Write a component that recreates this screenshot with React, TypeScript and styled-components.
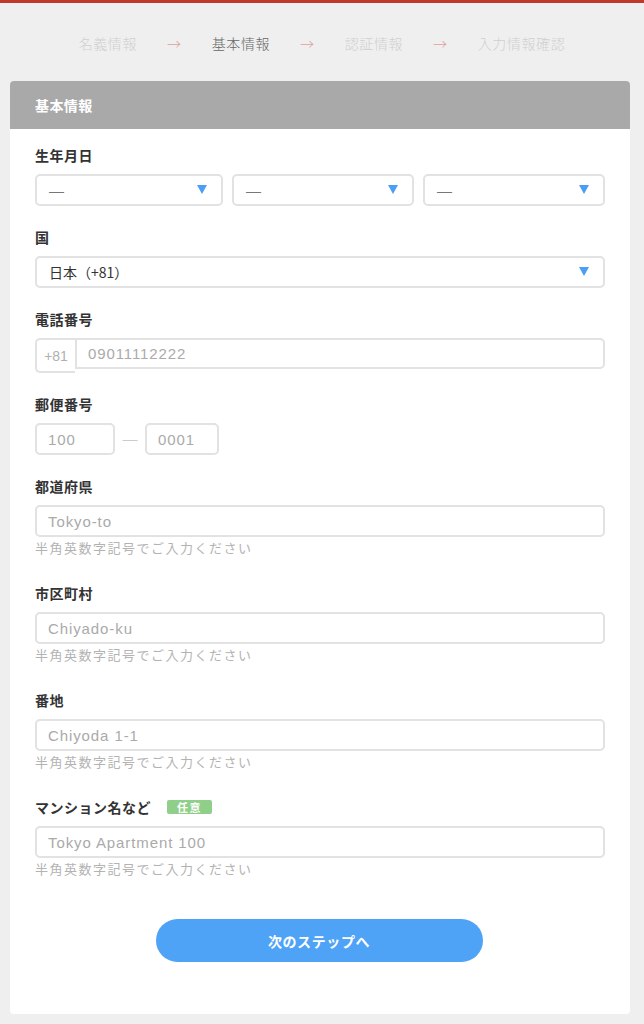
import React from 'react';
import styled, { createGlobalStyle } from 'styled-components';

const GlobalStyle = createGlobalStyle`
  html, body {
    margin: 0;
    padding: 0;
    background: #efefef;
  }
  body {
    font-family: "Noto Sans CJK JP", "Noto Sans", sans-serif;
    color: #333;
  }
`;

const latin = `"Liberation Sans", "Noto Sans CJK JP", sans-serif`;

const Page = styled.div`
  min-height: 1024px;
  background: #efefef;
  border-top: 3px solid #c0392b;
  padding-bottom: 10px;
`;

const Steps = styled.div`
  display: flex;
  justify-content: center;
  align-items: center;
  gap: 30px;
  padding: 30px 0 0 0;
  margin-bottom: 28px;
  height: 20px;
  line-height: 20px;
  font-size: 14px;
  font-weight: 300;
  letter-spacing: 0.6px;
`;

const Step = styled.span<{ $active?: boolean }>`
  color: ${p => (p.$active ? '#666' : '#cfcfcf')};
`;

const Arrow = styled.span`
  color: #e0a0a0;
  font-size: 14px;
`;

const Card = styled.div`
  margin: 0 14px 0 10px;
  background: #fff;
  border-radius: 4px;
  overflow: hidden;
`;

const CardHeader = styled.div`
  height: 48px;
  line-height: 48px;
  background: #a9a9a9;
  color: #fff;
  font-size: 14px;
  font-weight: 700;
  padding-left: 25px;
  letter-spacing: 0.4px;
`;

const CardBody = styled.div`
  padding: 16px 25px 52px 25px;
`;

const Field = styled.div<{ $hint?: boolean }>`
  margin-bottom: ${p => (p.$hint ? 26 : 21)}px;
`;

const Label = styled.div`
  display: flex;
  align-items: center;
  gap: 16px;
  height: 20px;
  line-height: 20px;
  font-size: 14px;
  font-weight: 700;
  color: #333;
  margin-bottom: 9px;
  letter-spacing: 0.5px;
`;

const Badge = styled.span`
  display: inline-block;
  background: #8fcf8a;
  color: #fff;
  font-size: 11px;
  font-weight: 700;
  line-height: 14px;
  height: 14px;
  padding: 0 10px;
  border-radius: 2px;
  letter-spacing: 1.5px;
`;

const Row = styled.div<{ $gap?: number }>`
  display: flex;
  gap: ${p => p.$gap ?? 9}px;
  align-items: flex-start;
`;

const Select = styled.div<{ $dark?: boolean; $grow?: number }>`
  flex: ${p => p.$grow ?? 1};
  position: relative;
  box-sizing: border-box;
  height: 32px;
  border: 2px solid #e2e2e2;
  border-radius: 5px;
  padding: 0 12px;
  display: flex;
  align-items: center;
  font-size: 14px;
  color: ${p => (p.$dark ? '#333' : '#777')};
`;

const SelectDash = styled.span`
  font-family: ${latin};
  font-size: 15px;
`;

const Caret = styled.span`
  position: absolute;
  right: 14px;
  top: 9px;
  width: 0;
  height: 0;
  border-left: 5px solid transparent;
  border-right: 5px solid transparent;
  border-top: 9px solid #4a9ff5;
`;

const Input = styled.div<{ $w?: number }>`
  box-sizing: border-box;
  ${p => (p.$w ? `width: ${p.$w}px;` : 'flex: 1;')}
  height: 32px;
  border: 2px solid #e2e2e2;
  border-radius: 5px;
  padding: 0 11px;
  display: flex;
  align-items: center;
  font-family: ${latin};
  font-size: 15px;
  letter-spacing: 0.9px;
  color: #aaa;
`;

const PhoneRow = styled.div`
  display: flex;
  align-items: flex-start;
`;

const Prefix = styled.div`
  box-sizing: border-box;
  width: 40px;
  height: 35px;
  border: 2px solid #e2e2e2;
  border-right: none;
  border-radius: 5px 0 0 5px;
  display: flex;
  align-items: center;
  justify-content: center;
  font-family: ${latin};
  font-size: 14px;
  color: #b0b0b0;
`;

const PhoneInput = styled(Input)`
  height: 31px;
  border-radius: 0 5px 5px 0;
`;

const Dash = styled.span`
  width: 30px;
  text-align: center;
  line-height: 32px;
  color: #ccc;
  font-family: ${latin};
  font-size: 15px;
`;

const Hint = styled.div`
  margin-top: 2px;
  font-size: 13px;
  line-height: 18px;
  color: #b3b3b3;
  letter-spacing: 1.5px;
`;

const ButtonWrap = styled.div`
  display: flex;
  justify-content: center;
  padding-top: 15px;
  padding-right: 2px;
`;

const NextButton = styled.button`
  width: 327px;
  height: 43px;
  border: none;
  border-radius: 22px;
  background: #4fa3f7;
  color: #fff;
  font-family: "Noto Sans CJK JP", sans-serif;
  font-size: 14px;
  font-weight: 700;
  letter-spacing: 0.6px;
`;

const HINT = '半角英数字記号でご入力ください';

export default function App() {
  return (
    <>
      <GlobalStyle />
      <Page>
        <Steps>
          <Step>名義情報</Step>
          <Arrow>→</Arrow>
          <Step $active>基本情報</Step>
          <Arrow>→</Arrow>
          <Step>認証情報</Step>
          <Arrow>→</Arrow>
          <Step>入力情報確認</Step>
        </Steps>
        <Card>
          <CardHeader>基本情報</CardHeader>
          <CardBody>
            <Field>
              <Label>生年月日</Label>
              <Row>
                <Select $grow={1.04}><SelectDash>—</SelectDash><Caret /></Select>
                <Select><SelectDash>—</SelectDash><Caret /></Select>
                <Select><SelectDash>—</SelectDash><Caret /></Select>
              </Row>
            </Field>
            <Field>
              <Label>国</Label>
              <Select $dark>日本（+81）<Caret /></Select>
            </Field>
            <Field>
              <Label>電話番号</Label>
              <PhoneRow>
                <Prefix>+81</Prefix>
                <PhoneInput>09011112222</PhoneInput>
              </PhoneRow>
            </Field>
            <Field>
              <Label>郵便番号</Label>
              <Row $gap={0}>
                <Input $w={80}>100</Input>
                <Dash>—</Dash>
                <Input $w={74}>0001</Input>
              </Row>
            </Field>
            <Field $hint>
              <Label>都道府県</Label>
              <Input>Tokyo-to</Input>
              <Hint>{HINT}</Hint>
            </Field>
            <Field $hint>
              <Label>市区町村</Label>
              <Input>Chiyado-ku</Input>
              <Hint>{HINT}</Hint>
            </Field>
            <Field $hint>
              <Label>番地</Label>
              <Input>Chiyoda 1-1</Input>
              <Hint>{HINT}</Hint>
            </Field>
            <Field $hint>
              <Label>
                マンション名など
                <Badge>任意</Badge>
              </Label>
              <Input>Tokyo Apartment 100</Input>
              <Hint>{HINT}</Hint>
            </Field>
            <ButtonWrap>
              <NextButton>次のステップへ</NextButton>
            </ButtonWrap>
          </CardBody>
        </Card>
      </Page>
    </>
  );
}
